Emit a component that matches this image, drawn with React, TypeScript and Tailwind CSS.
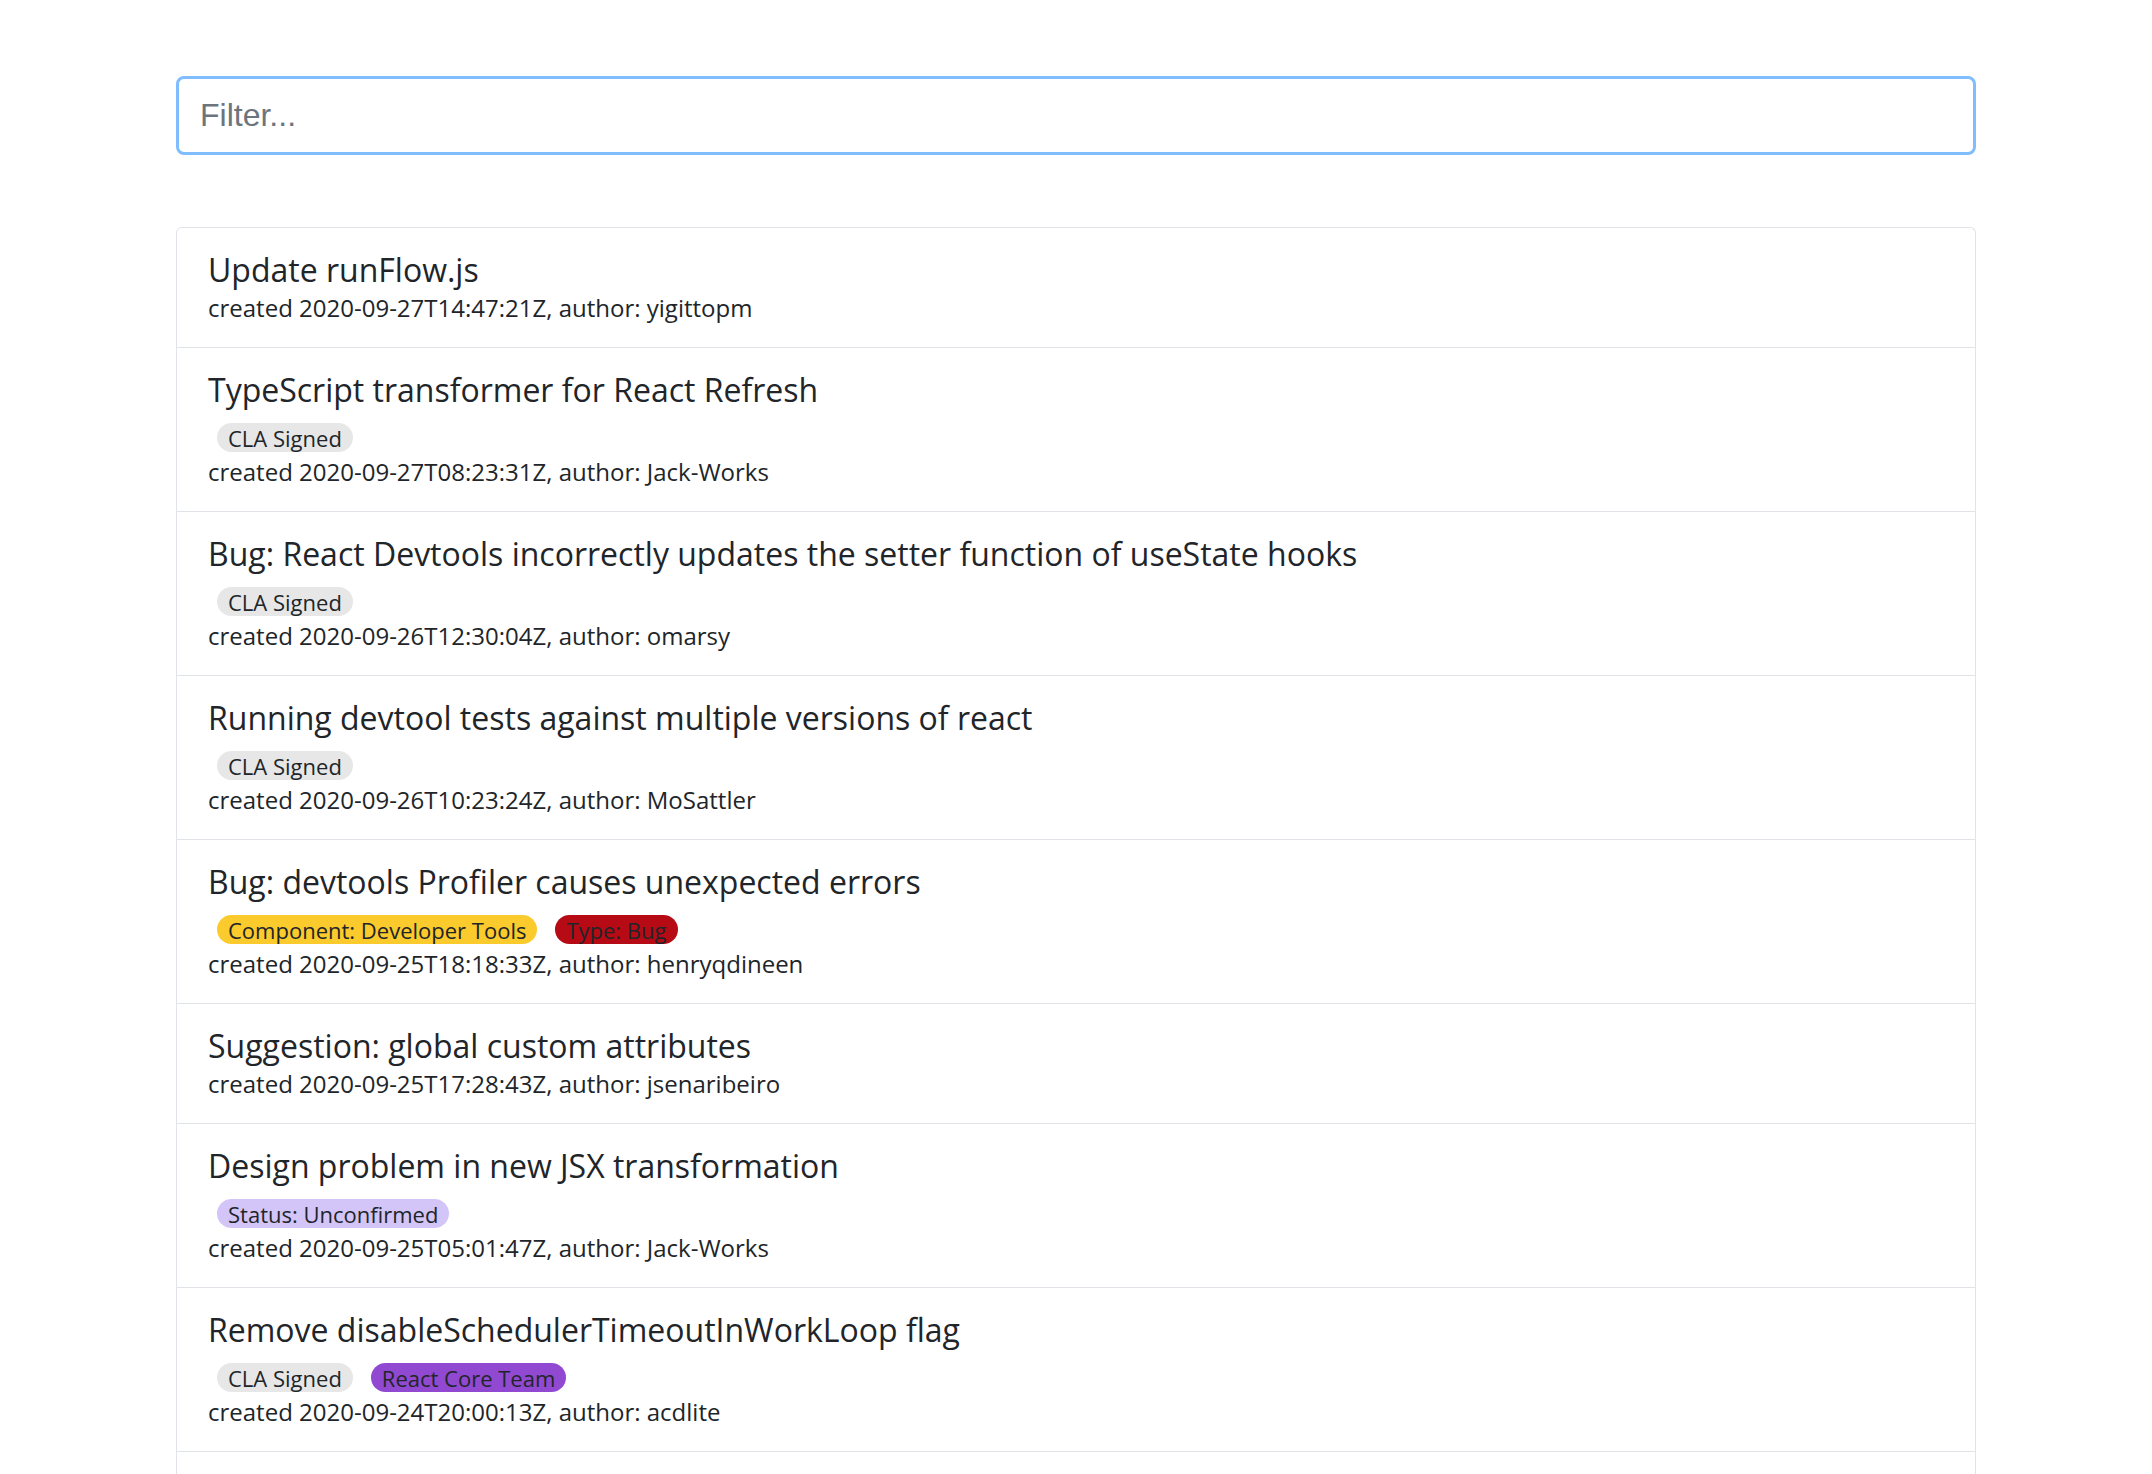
const issues = [
  {
    title: 'Update runFlow.js',
    created: '2020-09-27T14:47:21Z',
    author: 'yigittopm',
    labels: [],
  },
  {
    title: 'TypeScript transformer for React Refresh',
    created: '2020-09-27T08:23:31Z',
    author: 'Jack-Works',
    labels: ['CLA Signed'],
  },
  {
    title: 'Bug: React Devtools incorrectly updates the setter function of useState hooks',
    created: '2020-09-26T12:30:04Z',
    author: 'omarsy',
    labels: ['CLA Signed'],
  },
  {
    title: 'Running devtool tests against multiple versions of react',
    created: '2020-09-26T10:23:24Z',
    author: 'MoSattler',
    labels: ['CLA Signed'],
  },
  {
    title: 'Bug: devtools Profiler causes unexpected errors',
    created: '2020-09-25T18:18:33Z',
    author: 'henryqdineen',
    labels: ['Component: Developer Tools', 'Type: Bug'],
  },
  {
    title: 'Suggestion: global custom attributes',
    created: '2020-09-25T17:28:43Z',
    author: 'jsenaribeiro',
    labels: [],
  },
  {
    title: 'Design problem in new JSX transformation',
    created: '2020-09-25T05:01:47Z',
    author: 'Jack-Works',
    labels: ['Status: Unconfirmed'],
  },
  {
    title: 'Remove disableSchedulerTimeoutInWorkLoop flag',
    created: '2020-09-24T20:00:13Z',
    author: 'acdlite',
    labels: ['CLA Signed', 'React Core Team'],
  },
  {
    title: 'Bug: useEffect cleanup runs after unmount',
    created: '2020-09-24T15:12:09Z',
    author: 'gaearon',
    labels: [],
  },
];

const labelColors: Record<string, string> = {
  'CLA Signed': 'bg-[#e7e7e7]',
  'Component: Developer Tools': 'bg-[#fbca2c]',
  'Type: Bug': 'bg-[#b60a14]',
  'Status: Unconfirmed': 'bg-[#d4c5f9]',
  'React Core Team': 'bg-[#9149d1]',
};

export default function App() {
  return (
    <div className="min-h-screen bg-white font-['Open_Sans',sans-serif] text-[#212529]">
      <div className="mx-auto w-[1800px] pt-[76px]">
        <input
          type="text"
          placeholder="Filter..."
          className="block h-[79px] w-full rounded-[8px] border-[3px] border-[#80bdff] bg-white px-[21px] font-['Liberation_Sans',Arial,sans-serif] text-[32px] text-[#495057] placeholder-[#6c757d] outline-none"
        />

        <ul className="mt-[72px] rounded-t-[6px] border border-b-0 border-[#e0e3e7]">
          {issues.map((issue) => (
            <li
              key={issue.created}
              className="border-b border-[#e0e3e7] px-[31px] pt-[22px] pb-[21px]"
            >
              <div className="text-[32px] leading-[40px]">{issue.title}</div>
              {issue.labels.length > 0 && (
                <div className="flex pt-[13px] pb-[2px]">
                  {issue.labels.map((label) => (
                    <span
                      key={label}
                      className={`mx-[9px] inline-flex h-[29px] items-center rounded-full px-[11px] text-[22px] leading-none ${labelColors[label]}`}
                    >
                      {label}
                    </span>
                  ))}
                </div>
              )}
              <div className="text-[24px] leading-[36px]">
                created {issue.created}, author: {issue.author}
              </div>
            </li>
          ))}
        </ul>
      </div>
    </div>
  );
}
